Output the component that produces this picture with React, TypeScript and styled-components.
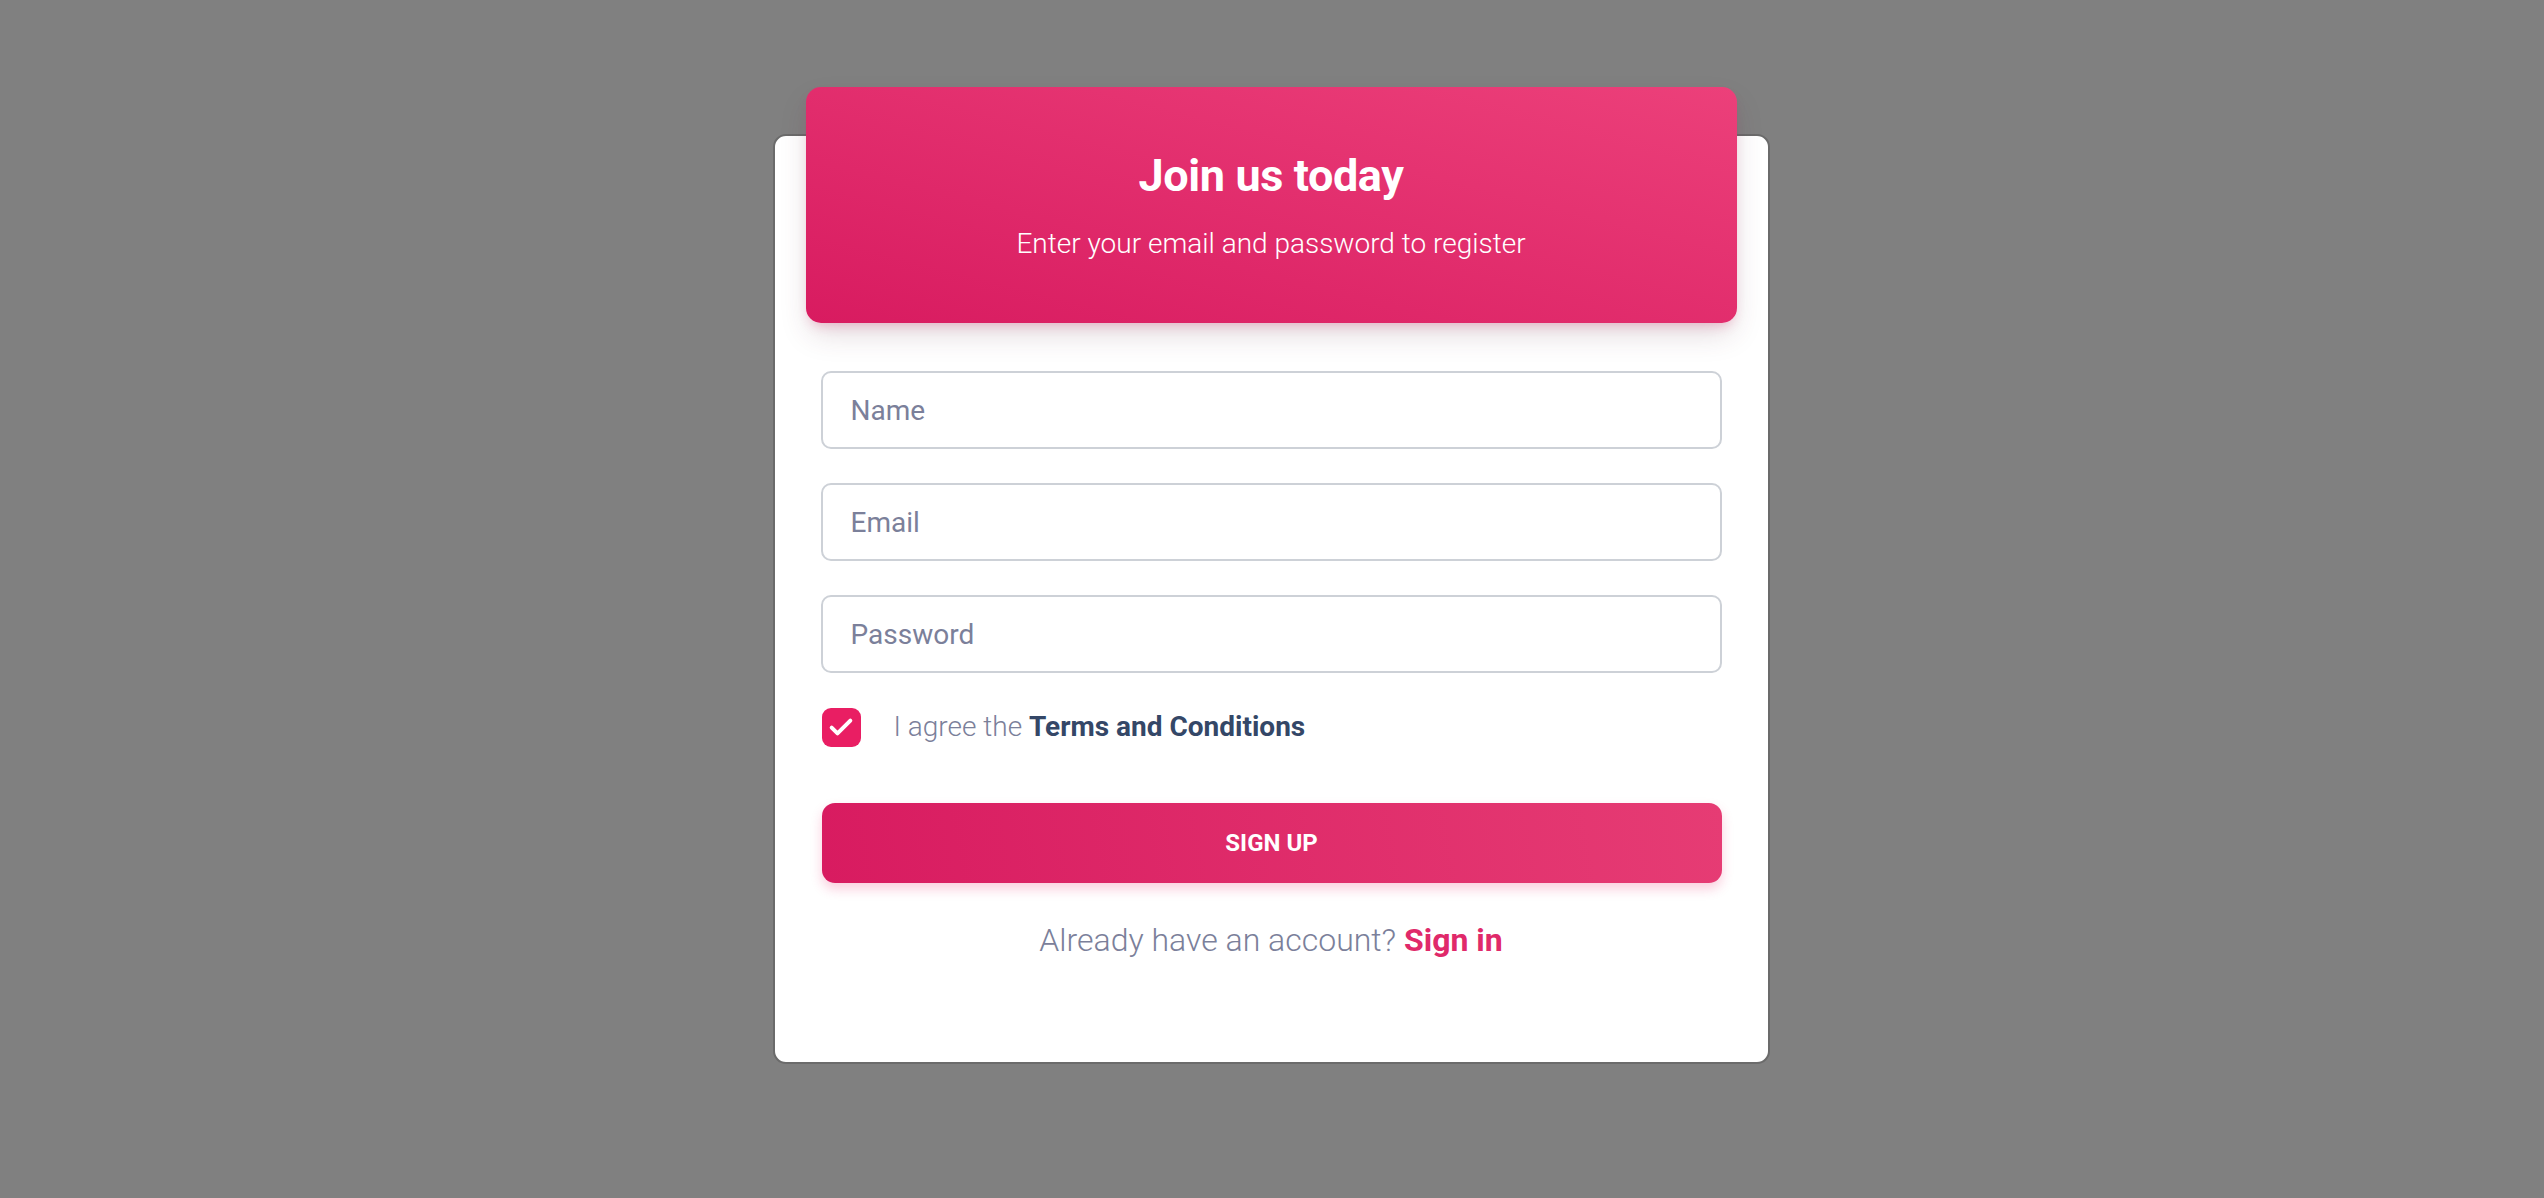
import React from "react";
import styled, { createGlobalStyle } from "styled-components";

const GlobalStyle = createGlobalStyle`
  html, body {
    margin: 0;
    padding: 0;
    background: #808080;
  }
  * { box-sizing: border-box; }
  body {
    font-family: Roboto, "Noto Sans", "Liberation Sans", sans-serif;
    -webkit-font-smoothing: antialiased;
  }
`;

const Page = styled.div`
  min-height: 100vh;
  display: flex;
  align-items: center;
  justify-content: center;
  background: #808080;
`;

const Card = styled.div`
  width: 997px;
  margin-right: 2px;
  background: #ffffff;
  border: 2px solid #6b6b6b;
  border-radius: 13px;
  display: flex;
  flex-direction: column;
  padding: 0 0 98px;
`;

const Header = styled.div`
  margin: -49px 31px 0;
  height: 236px;
  border-radius: 15px;
  background: linear-gradient(to top right, #d81b60, #ec407a);
  box-shadow: 0 14px 30px -4px rgba(90, 40, 60, 0.18), 0 6px 12px -4px rgba(233, 30, 99, 0.25);
  display: flex;
  flex-direction: column;
  align-items: center;
  justify-content: center;
  gap: 16px;
  color: #ffffff;
`;

const Title = styled.h3`
  margin: 0;
  font-size: 45px;
  line-height: 62px;
  font-weight: 700;
  letter-spacing: -0.4px;
`;

const Subtitle = styled.p`
  margin: 0;
  font-size: 28px;
  line-height: 42px;
  font-weight: 300;
`;

const Form = styled.div`
  display: flex;
  flex-direction: column;
  padding: 48px 46px 0;
`;

const Fields = styled.div`
  display: flex;
  flex-direction: column;
  gap: 34px;
`;

const Input = styled.input`
  width: 100%;
  height: 78px;
  border: 2px solid #cdd1d7;
  border-radius: 10px;
  padding: 0 28px;
  font-family: Roboto, "Noto Sans", sans-serif;
  font-size: 28px;
  font-weight: 400;
  color: #344767;
  background: #ffffff;
  outline: none;
  &::placeholder {
    color: #7b809a;
  }
`;

const CheckRow = styled.label`
  display: flex;
  align-items: center;
  gap: 33px;
  margin-top: 33px;
  padding-left: 1px;
  cursor: pointer;
`;

const CheckBox = styled.span`
  width: 39px;
  height: 39px;
  border-radius: 9px;
  background: #e91e63;
  display: flex;
  align-items: center;
  justify-content: center;
  flex-shrink: 0;
`;

const CheckLabel = styled.span`
  font-size: 28px;
  line-height: 42px;
  font-weight: 300;
  color: #7b809a;
`;

const Strong = styled.strong`
  font-weight: 700;
  color: #344767;
`;

const Button = styled.button`
  margin-top: 55px;
  margin-left: 1px;
  height: 80px;
  border: none;
  border-radius: 13px;
  background: linear-gradient(80deg, #d81b60, #e63c74);
  box-shadow: 0 6px 12px rgba(233, 30, 99, 0.22);
  color: #ffffff;
  font-family: Roboto, "Noto Sans", sans-serif;
  font-size: 24px;
  font-weight: 700;
  text-transform: uppercase;
  cursor: pointer;
`;

const Footer = styled.p`
  margin: 33px 0 0;
  text-align: center;
  font-size: 32px;
  line-height: 48px;
  font-weight: 300;
  color: #7b809a;
`;

const SignIn = styled.a`
  font-weight: 700;
  color: #e0296a;
  text-decoration: none;
`;

export default function App() {
  return (
    <>
      <GlobalStyle />
      <Page>
        <Card>
          <Header>
            <Title>Join us today</Title>
            <Subtitle>Enter your email and password to register</Subtitle>
          </Header>
          <Form>
            <Fields>
              <Input placeholder="Name" />
              <Input placeholder="Email" type="email" />
              <Input placeholder="Password" type="password" />
            </Fields>
            <CheckRow>
              <CheckBox>
                <svg width="28" height="28" viewBox="0 0 24 24" fill="none">
                  <path
                    d="M4 12.5l5 5L20 6.5"
                    stroke="#ffffff"
                    strokeWidth="3.4"
                    strokeLinecap="round"
                    strokeLinejoin="round"
                  />
                </svg>
              </CheckBox>
              <CheckLabel>
                I agree the <Strong>Terms and Conditions</Strong>
              </CheckLabel>
            </CheckRow>
            <Button>Sign Up</Button>
            <Footer>
              Already have an account? <SignIn href="#">Sign in</SignIn>
            </Footer>
          </Form>
        </Card>
      </Page>
    </>
  );
}
